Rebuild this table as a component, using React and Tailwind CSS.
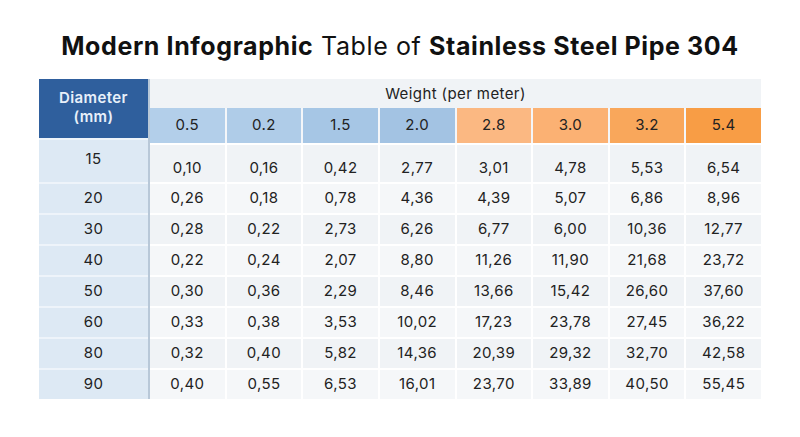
const heads = [
  { v: "0.5", c: "bg-[#b3cfea]" },
  { v: "0.2", c: "bg-[#afcce8]" },
  { v: "1.5", c: "bg-[#a6c6e5]" },
  { v: "2.0", c: "bg-[#a3c3e3]" },
  { v: "2.8", c: "bg-[#fbb882]" },
  { v: "3.0", c: "bg-[#fbb173]" },
  { v: "3.2", c: "bg-[#f9a75b]" },
  { v: "5.4", c: "bg-[#f89d45]" },
];

const rows = [
  ["15", "0,10", "0,16", "0,42", "2,77", "3,01", "4,78", "5,53", "6,54"],
  ["20", "0,26", "0,18", "0,78", "4,36", "4,39", "5,07", "6,86", "8,96"],
  ["30", "0,28", "0,22", "2,73", "6,26", "6,77", "6,00", "10,36", "12,77"],
  ["40", "0,22", "0,24", "2,07", "8,80", "11,26", "11,90", "21,68", "23,72"],
  ["50", "0,30", "0,36", "2,29", "8,46", "13,66", "15,42", "26,60", "37,60"],
  ["60", "0,33", "0,38", "3,53", "10,02", "17,23", "23,78", "27,45", "36,22"],
  ["80", "0,32", "0,40", "5,82", "14,36", "20,39", "29,32", "32,70", "42,58"],
  ["90", "0,40", "0,55", "6,53", "16,01", "23,70", "33,89", "40,50", "55,45"],
];

export default function App() {
  return (
    <div
      className="w-[800px] h-[437px] bg-white text-[#222]"
      style={{ fontFamily: "Inter, 'Noto Sans', sans-serif" }}
    >
      <h1 className="pt-[31px] h-[79px] text-center text-[25px] leading-[30px] tracking-[0.6px] text-[#111]">
        <span className="font-bold">Modern Infographic</span>{" "}
        <span className="font-normal">Table of</span>{" "}
        <span className="font-bold">Stainless Steel Pipe 304</span>
      </h1>

      <div className="mx-[39px] flex text-[15px] tracking-[0.4px]">
        {/* left column */}
        <div className="w-[111px] flex flex-col border-r-2 border-[#b8c8d8]">
          <div className="h-[59px] bg-[#2f5f9d] text-[#e8f0fa] font-semibold text-[15px] leading-[19px] flex items-center justify-center text-center pb-[4px]">
            Diameter
            <br />
            (mm)
          </div>
          {rows.map((r, i) => (
            <div
              key={r[0]}
              className={`${i === 0 ? "h-[44px] pb-[4px]" : "h-[31px]"} bg-[#dde9f4] border-t-2 border-[#eef4fa] flex items-center justify-center`}
            >
              {r[0]}
            </div>
          ))}
        </div>

        {/* data */}
        <div className="flex-1 flex flex-col">
          <div className="h-[29px] bg-[#f0f3f6] flex items-center justify-center pt-[2px]">
            Weight (per meter)
          </div>
          <div className="h-[35px] grid grid-cols-8 gap-x-[2px] bg-[#f4f6f9]">
            {heads.map((h) => (
              <div key={h.v} className={`${h.c} flex items-center justify-center`}>
                {h.v}
              </div>
            ))}
          </div>
          {rows.map((r, i) => (
            <div
              key={r[0]}
              className={`${i === 0 ? "h-[39px]" : "h-[31px]"} grid grid-cols-8 gap-x-[2px] border-t-2 border-white bg-white`}
            >
              {r.slice(1).map((v, j) => (
                <div
                  key={j}
                  className={`${i % 2 === 0 ? "bg-[#f0f3f6]" : "bg-[#f5f7f9]"} ${i === 0 ? "pt-[10px]" : ""} flex items-center justify-center`}
                >
                  {v}
                </div>
              ))}
            </div>
          ))}
        </div>
      </div>
    </div>
  );
}
